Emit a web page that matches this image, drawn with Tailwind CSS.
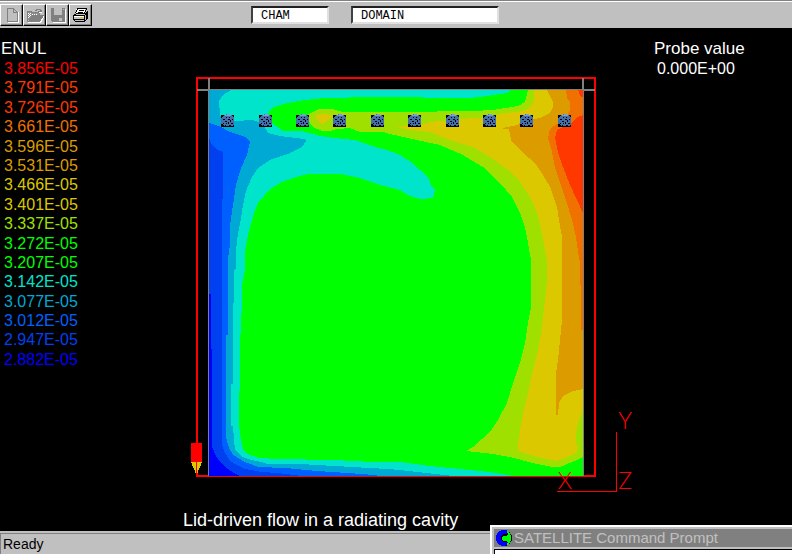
<!DOCTYPE html>
<html lang="en">

<head>
    <meta charset="UTF-8">
    <meta name="viewport" content="width=device-width, initial-scale=1.0">
    <title>Lid-driven flow in a radiating cavity</title>
    <script src="https://cdn.jsdelivr.net/npm/@tailwindcss/browser@4"></script>
</head>

<body class="relative flex flex-col h-screen overflow-hidden bg-black font-['Liberation_Sans',sans-serif]">
    <header class="flex items-start h-7 shrink-0 pt-[3px] bg-[#c0c0c0] border-t border-[#808080] shadow-[inset_0_1px_0_#fff]">
        <div class="flex w-[251px]">
            <button type="button" aria-label="New" class="grid place-items-center w-[23px] h-[22px] border border-t-white border-l-white border-r-black border-b-black shadow-[inset_-1px_-1px_0_#808080]">
                <svg class="w-4 h-4" viewBox="0 0 16 16" fill="none" shape-rendering="crispEdges">
                    <path d="M4 15.500h10.500V5" stroke="#fff" />
                    <path d="M3.500 1.500h6l4 4v9h-10zM9.500 1.500v4h4" stroke="#808080" />
                </svg>
            </button>
            <button type="button" aria-label="Open" class="grid place-items-center w-[23px] h-[22px] border border-t-white border-l-white border-r-black border-b-black shadow-[inset_-1px_-1px_0_#808080]">
                <svg class="w-[18px] h-4" viewBox="0 0 18 16" shape-rendering="crispEdges">
                    <path d="M2 15h12l4-7v2l-3 6H2z" fill="#fff" />
                    <path d="M1 5h4l1 1h7v3H6l-4 5H1z" fill="#909090" />
                    <path d="M2 15l4-7h12l-4 7z" fill="#808080" />
                    <path d="M9 3.500h1v-1h4v1h1v2m-3-1h4M1.500 15V4.500h4v1h8V8" fill="none" stroke="#808080" />
                    <path d="M2 6h1v1H2zM4 6h1v1H4zM3 7h1v1H3zM6 7h1v1H6zM8 7h1v1H8zM10 7h1v1h-1zM2 8h1v1H2zM4 8h1v1H4zM3 9h1v1H3zM2 10h1v1H2zM13 5h3v1h-3z" fill="#fff" />
                </svg>
            </button>
            <button type="button" aria-label="Save" class="grid place-items-center w-[23px] h-[22px] border border-t-white border-l-white border-r-black border-b-black shadow-[inset_-1px_-1px_0_#808080]">
                <svg class="w-4 h-4" viewBox="0 0 16 16" shape-rendering="crispEdges">
                    <path d="M2 2h14v14H3l-1-1z" fill="#fff" />
                    <path d="M1 1h14v14H2l-1-1z" fill="#808080" />
                    <path d="M4 1h8v7H4zM13 2h1v1h-1zM9 11h3v3H9z" fill="#c0c0c0" />
                </svg>
            </button>
            <button type="button" aria-label="Print" class="grid place-items-center w-[23px] h-[22px] border border-t-white border-l-white border-r-black border-b-black shadow-[inset_-1px_-1px_0_#808080]">
                <svg class="w-[18px] h-4" viewBox="0 0 18 16" shape-rendering="crispEdges">
                    <path d="M5 1h9l-2 6H3z" fill="#fff" />
                    <path d="M1 8l3-2h12v5l-3 4H3l-2-2z" fill="#c0c0c0" />
                    <path d="M3.500 6.500L5.500 1.500h9l-2 5M7 3.500h5M6 5.500h5M1.500 8.500l3-2h9l2-2v7l-3 3h-9l-2-2zM1.500 8.500h11l3-3M12.500 8.500v6M2 12.500h10M14.500 7v5" fill="none" stroke="#000" />
                    <path d="M2 9h10v1H2z" fill="#fff" />
                    <path d="M8 10h3v1H8z" fill="#dcc800" />
                </svg>
            </button>
        </div>
        <input type="text" aria-label="Group" value="CHAM"
            class="w-[78px] h-[18px] mt-[2px] pt-[2px] pl-2 bg-white border-2 border-t-[#202020] border-l-[#404040] border-r-[#e0e0e0] border-b-[#e0e0e0] font-['Liberation_Mono',monospace] text-xs leading-3 text-black outline-none">
        <input type="text" aria-label="Object" value="DOMAIN"
            class="w-[148px] h-[18px] mt-[2px] ml-[22px] pt-[2px] pl-2 bg-white border-2 border-t-[#202020] border-l-[#404040] border-r-[#e0e0e0] border-b-[#e0e0e0] font-['Liberation_Mono',monospace] text-xs leading-3 text-black outline-none">
    </header>

    <main class="flex flex-1 min-h-0 text-white text-[16px] leading-[20px]">
        <section class="w-[183px] shrink-0 pt-[11px]">
            <h2 class="pl-px text-[17px]">ENUL</h2>
            <ul class="flex flex-col justify-between h-[310px] pl-1 leading-[19px]">
                <li class="text-[#ff0000]">3.856E-05</li>
                <li class="text-[#ff3800]">3.791E-05</li>
                <li class="text-[#ff3800]">3.726E-05</li>
                <li class="text-[#f07000]">3.661E-05</li>
                <li class="text-[#dc9c00]">3.596E-05</li>
                <li class="text-[#dc9c00]">3.531E-05</li>
                <li class="text-[#dcc800]">3.466E-05</li>
                <li class="text-[#dcc800]">3.401E-05</li>
                <li class="text-[#a0e000]">3.337E-05</li>
                <li class="text-[#00ff00]">3.272E-05</li>
                <li class="text-[#00ff00]">3.207E-05</li>
                <li class="text-[#00e4cc]">3.142E-05</li>
                <li class="text-[#00a8d4]">3.077E-05</li>
                <li class="text-[#0060ff]">3.012E-05</li>
                <li class="text-[#0040f0]">2.947E-05</li>
                <li class="text-[#0000ff]">2.882E-05</li>
            </ul>
        </section>

        <figure class="flex-1 min-w-0 pt-[42px]">
            <svg class="block w-[457px] h-[432px]" viewBox="183 70 457 432" shape-rendering="crispEdges" role="img" aria-label="Contours of ENUL">
                <defs>
                    <g id="block">
                        <path d="M0 1h13v12H0z" fill="#000" />
                        <path d="M3 1h2V0h4v1h2l2 3v6l-2 2H3l-2-2H0V5z" fill="#4470ac" />
                        <path d="M4 1h2V0h3v1h1v1H4z" fill="#78a0d8" />
                        <path d="M5 3h1v1H5zM8 3h1v1H8zM2 5h2v1H2zM7 5h2v1H7zM11 5h1v1h-1zM4 7h2v1H4zM9 6h1v2H9zM2 9h1v1H2zM5 9h1v1H5zM7 8h1v2H7zM10 9h2v1h-2zM4 11h1v1H4zM8 11h2v1H8z" fill="#000" />
                    </g>
                </defs>

                <!-- contour bands -->
                <path fill="#00ff00" d="M209 90H583V476H209z" />
                <path fill="#00e4cc" d="M209 90H511L507 93L487 96L470 98L375 97L323 98L298 101L283 104L272 108L267 115L272 123L283 131L302 131L320 136L335 138L355 140L372 146L390 151L400 155L411 162L420 170L428 177L431 185L435 190L433 198L420 199L410 196L400 190L380 185L356 177L340 174H308L296 177L282 182L270 189L264 196L258 203L254 213L250 227L247 240L245 252V270L242 285V303L240 344V385L239 398V425L241 441L243 449L247 454L259 458L278 459L334 460L372 462L400 462L430 466L460 469L490 472L514 476H209z" />
                <path fill="#00a8d4" d="M209 90H231L223 95L219 101L220 115L224 122L235 121L253 120L263 124L268 133L280 136L304 139L306 141L302 147L290 153L270 160L258 168L252 177L246 191L243 205L241 219L238 233L236 250V269L234 270V303H233V384H231V426H233L234 440L235 450L241 456L248 459L261 462L268 464H300L335 466L388 469L400 470L426 473L454 476H209z" />
                <path fill="#0060ff" d="M209 123L219 126L230 132L245 137L250 142L247 155L241 168L236 185L233 205L230 225L230 245L228 259V335H226V437L229 448L233 455L245 462L258 467L286 468L317 471L363 474L382 476H209z" />
                <path fill="#0040f0" d="M209 138L211 143L216 149L223 152V199H222V445L225 453L230 461L237 465L245 469L262 472L278 473L302 476H209z" />
                <path fill="#0000ff" d="M209 294H211V349H212V447L216 456L220 462L228 469L234 473L240 476H209z" />
                <path fill="#a0e000" d="M307 115L319 109H332L343 112H400L473 111L493 110L518 106L525 102L528 90H583V457L577 460L560 467H552L533 463L510 457L493 454L466 451L473 447L490 432L498 420L507 403L513 383L520 363L525 343L528 323L531 307V260L528 243L525 227L520 213L512 197L500 183L483 167L463 155L440 145L417 140L390 134L383 132H360L350 128L337 129L330 131H322L313 127L308 120z" />
                <path fill="#dcc800" d="M315 115L325 114L334 116L328 120L322 125L317 120zM396 127L420 125L430 122L460 119L490 117L503 113L518 112L527 109L532 105L534 100V90H583V411L579 420L576 433V445L578 446L577 452L570 456L557 461L537 457L518 451V445L520 430L523 413L528 393L533 370L538 350L542 327L545 300L547 280V260L545 250L542 233L537 213L530 197L520 182L508 170L490 157L473 147L450 140L430 132L410 130z" />
                <path fill="#dc9c00" d="M547 90L553 102V107L550 113L540 118L523 121L517 125L503 128V129H509L511 140L522 152L535 163L543 175L550 187L557 207L559 220L562 237V320L560 340L558 360L556 373V415H558L559 403L563 396L573 391L583 389V90z" />
                <path fill="#f07000" d="M566 90L567 98L570 102V110L566 118L557 124L550 129L548 138L552 152L555 167L560 183L567 203L572 220L576 237L578 252L580 262V285H581V330H583V90z" />
                <path fill="#ff3800" d="M578 90L581 97H583V90zM583 115L578 117L570 124L557 130L555 138L558 152L563 167L570 185L577 200L583 213z" />

                <!-- obstacles -->
                <use href="#block" x="221" y="114" />
                <use href="#block" x="259" y="114" />
                <use href="#block" x="296" y="114" />
                <use href="#block" x="333" y="114" />
                <use href="#block" x="371" y="114" />
                <use href="#block" x="408" y="114" />
                <use href="#block" x="446" y="114" />
                <use href="#block" x="483" y="114" />
                <use href="#block" x="520" y="114" />
                <use href="#block" x="558" y="114" />

                <!-- domain frame -->
                <path fill="#ff0000" d="M196 77H596V79H196zM196 77H198V477H196zM594 77H596V477H594zM196 476H596V477H196zM196 475H209V476H196zM583 475H596V476H583z" />
                <path fill="#808080" d="M208 78H210V90H209V476H208zM197 89H209V91H197zM209 89H583V90H209zM582 78H584V476H583V90H582zM584 89H595V91H584z" />

                <!-- probe -->
                <path fill="#ff0000" d="M191 443H202V462H191z" />
                <path fill="#dcc800" d="M191 462H202L197 474H196z" />
                <path fill="#ff0000" d="M196 462H197V476H196z" />

                <!-- axes -->
                <path fill="#ff0000" d="M616 432H617V492H557V491H616z" />
                <g fill="#ff0000" class="font-['Lato',sans-serif] font-light text-[23px]" text-anchor="middle">
                    <text x="625" y="429">Y</text>
                    <text x="565" y="489">X</text>
                    <text x="625" y="489">Z</text>
                </g>
            </svg>
            <figcaption class="pt-[8px] text-[18px] whitespace-nowrap">Lid-driven flow in a radiating cavity</figcaption>
        </figure>

        <section class="w-[138px] shrink-0 pt-[11px]">
            <h2 class="text-[17px]">Probe value</h2>
            <p class="pl-[3px]">0.000E+00</p>
        </section>
    </main>

    <footer class="h-[23px] shrink-0 pt-[2px] bg-[#c0c0c0]">
        <p class="h-full pl-[2px] border-t border-l border-[#808080] text-black text-[14px] leading-[20px]">Ready</p>
    </footer>

    <div class="absolute left-[490px] right-0 bottom-0 h-[29px] pl-[2px] pt-[2px] bg-[#c0c0c0] border-t-2 border-l-2 border-white">
        <div class="flex items-center gap-[2px] h-[18px] pl-[2px] bg-[#808080]">
            <svg class="w-4 h-4" viewBox="0 0 16 16" shape-rendering="crispEdges">
                <circle cx="8" cy="8" r="8" fill="#000" />
                <path d="M10 0H6L2 2L0 6v4l2 4 4 2h3l3-3-1-1H7L5 10V6l2-2h4l1-2z" fill="#0000ff" />
                <path d="M11 1l3 2 1 4v3l-2 4-2 1 1-3-2-1H7L6 9l1-3h4l1-2z" fill="#00ff00" />
            </svg>
            <h2 class="text-[15px] leading-[18px] text-[#c0c0c0] whitespace-nowrap">SATELLITE Command Prompt</h2>
        </div>
        <div class="h-[5px] mt-[2px] bg-white border-t border-l border-black"></div>
    </div>
</body>

</html>
